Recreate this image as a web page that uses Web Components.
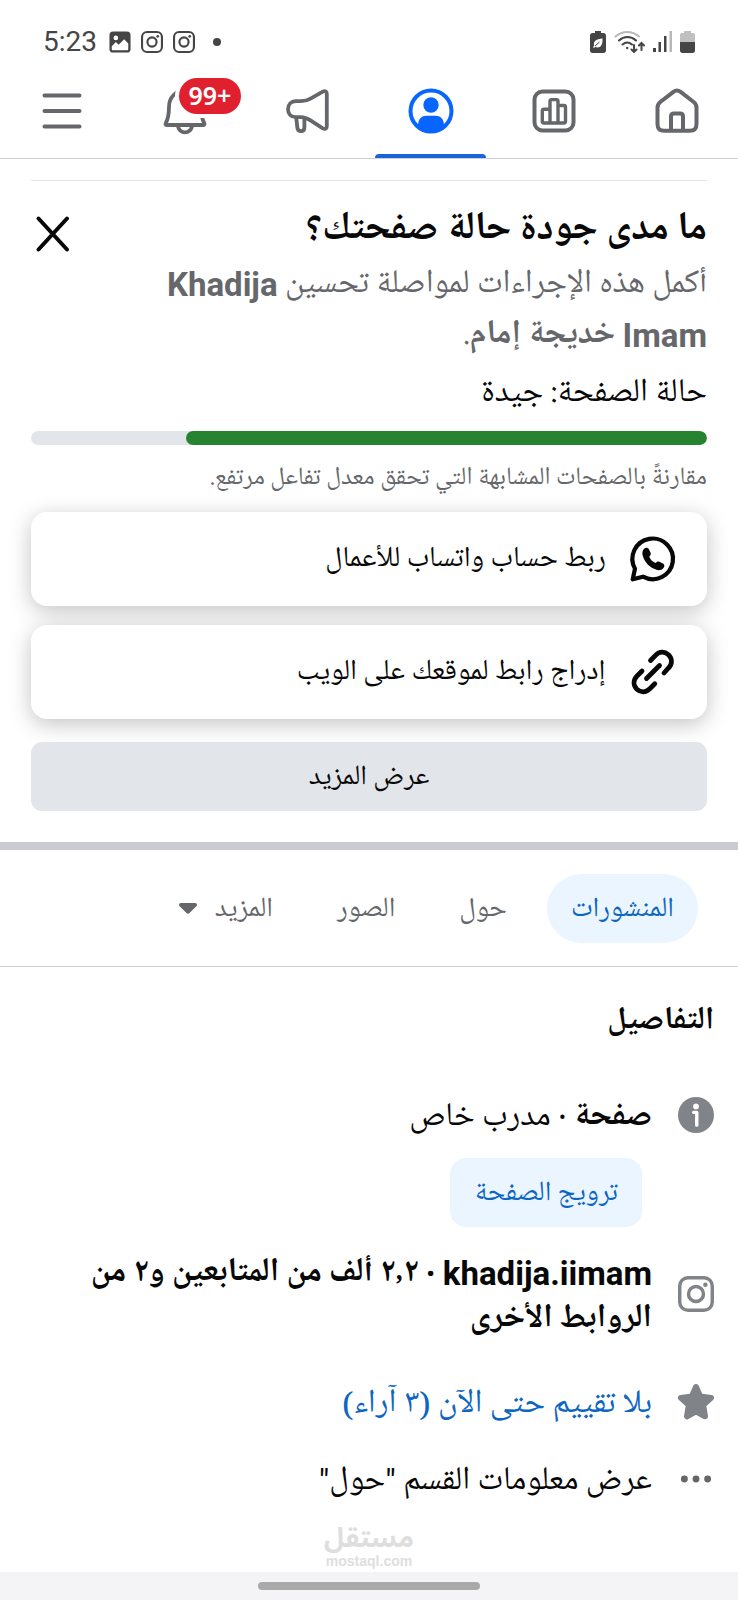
<!DOCTYPE html>
<html lang="ar" dir="rtl">
<head>
<meta charset="utf-8">
<meta name="viewport" content="width=device-width, initial-scale=1">
<title>حالة الصفحة</title>
<style>
  html, body { margin: 0; }
  body {
    background: #fff;
    color: #080809;
    font-family: "Noto Naskh Arabic UI", "Noto Naskh Arabic", Roboto, serif;
    --latin: Roboto, "Liberation Sans", sans-serif;
    --muted: #65676b;
    --blue: #0c66c2;
    --tint: #ebf5ff;
    --line: #ced0d4;
    --wash: #e2e5e9;
  }
</style>
</head>
<body>
<page-screen></page-screen>

<script>
const define = (name, html, setup) => {
  const template = document.createElement('template');
  template.innerHTML = `<style>
    *, ::before, ::after { box-sizing: border-box; }
    svg { display: block; flex: none; }
    button { font: inherit; color: inherit; border: 0; background: none; margin: 0; padding: 0; }
    a { color: inherit; text-decoration: none; }
  </style>` + html;
  customElements.define(name, class extends HTMLElement {
    constructor() {
      super();
      this.attachShadow({ mode: 'open' }).append(template.content.cloneNode(true));
    }
    connectedCallback() { if (setup) setup(this, this.shadowRoot); }
  });
};

const ICONS = {
  home: '<g fill="none" stroke="currentColor" stroke-width="4" stroke-linejoin="round"><path d="M4.5 20.5c0-2.4.9-4 2.8-5.5L20.400 4.900c2.400-1.800 4.800-1.800 7.200 0L40.700 15c1.900 1.500 2.800 3.100 2.800 5.500V37c0 4.800-2 6.800-6.800 6.800H11.300c-4.800 0-6.800-2-6.800-6.800z"/><path d="M18 43V29.500c0-2 1-3 3-3h6c2 0 3 1 3 3V43"/></g>',
  insights: '<g fill="none" stroke="currentColor" stroke-linejoin="round"><rect x="4.500" y="4.500" width="39" height="39" rx="8" stroke-width="4"/><path stroke-width="3.400" d="M20 36h-6c-1 0-1.700-.7-1.700-1.700V24c0-1 .7-1.700 1.700-1.700h6M28 18.500h5.800c1 0 1.700.7 1.700 1.700v14.100c0 1-.7 1.700-1.700 1.700H28M20 36V14.300c0-1 .7-1.700 1.700-1.700h4.600c1 0 1.700.7 1.700 1.700V36z"/></g>',
  profile: '<circle cx="24" cy="24" r="20.500" fill="none" stroke="currentColor" stroke-width="4"/><circle cx="24" cy="18" r="7.700" fill="currentColor"/><path fill="currentColor" d="M11 37.500c.5-5.500 3.500-8.800 8.500-8.800h9c5 0 8 3.300 8.500 8.800C34 42 29.500 44.500 24 44.500S14 42 11 37.500z"/>',
  megaphone: '<g fill="none" stroke="currentColor" stroke-width="3.800" stroke-linecap="round" stroke-linejoin="round"><path d="M12 14.200h5c3.500 0 6.500-.7 9.500-2.500l12.300-7c2.200-1.200 4-.2 4 2.200v32.300c0 2.400-1.800 3.400-4 2.200l-12.300-8c-3-1.900-6-3.200-9.500-3.200h-5c-5 0-8-3.500-8-8s3-8 8-8z"/><path d="M12.300 31l1 9.500c.3 2.400 1.500 3.700 3.700 3.700s3.400-1.300 3.400-3.700V32"/></g>',
  bell: '<g fill="none" stroke="currentColor" stroke-width="3.800" stroke-linejoin="round"><path d="M5.500 38c-.9 0-1.200-.8-.8-1.600C7.500 31 8 28 8 20 8 10 15 3.500 24 3.500S40 10 40 20c0 8 .5 11 3.300 16.400.4.8.1 1.600-.8 1.600z"/><path d="M17 39.500c1 3.800 3.500 5.900 7 5.900s6-2.100 7-5.900"/></g>',
  menu: '<path d="M6.500 8.500h35M6.500 24h35M6.500 39.500h35" stroke="currentColor" stroke-width="4" stroke-linecap="round"/>',
  close: '<path d="M9.500 8.500l28.500 31M38 8.500l-28.500 31" stroke="currentColor" stroke-width="4" stroke-linecap="round"/>',
  whatsapp: '<path d="M3.700 44.300l2.300-10.500A20.300 20.300 0 1 1 14 41.700z" fill="none" stroke="currentColor" stroke-width="4.200" stroke-linejoin="round"/><path fill="currentColor" d="M15.300 13.600c1.600-1.300 3.700-1.100 4.600.7l1.700 3.500c.7 1.500-.1 2.700-1.400 4 1.200 2.800 3.300 5 6.200 6.200 1.300-1.300 2.500-2 4-1.300l3.500 1.700c1.700.9 2 2.900.6 4.500-1.700 2-4.200 2.800-7 1.900-6.600-2-11.500-6.900-13.700-13.700-1-2.900-.3-5.700 1.500-7.500z"/>',
  link: '<g fill="none" stroke="currentColor" stroke-width="4.800" stroke-linecap="round"><path d="M17.500 30.500l13-13"/><path d="M21.500 12.500l5-5.200c4-4 9-4 13-.5 3.900 4 3.900 9.200 0 13.200L35 25"/><path d="M13 23l-5 5c-3.900 4-3.900 9.200-.2 13.200 4 3.600 9 3.600 13-.4l5-5"/></g>',
  info: '<circle cx="24" cy="24" r="24" fill="currentColor"/><circle cx="24" cy="12.500" r="3.800" fill="#fff"/><path d="M21 20.500h4v17" fill="none" stroke="#fff" stroke-width="4.600" stroke-linecap="round" stroke-linejoin="round"/>',
  instagram: '<g fill="none" stroke="currentColor" stroke-width="4.600"><rect x="2.300" y="2.300" width="43.400" height="43.400" rx="11"/><circle cx="24" cy="24" r="10"/></g><circle cx="36.500" cy="11.500" r="3" fill="currentColor"/>',
  star: '<path fill="currentColor" stroke="currentColor" stroke-width="8" stroke-linejoin="round" d="M24 4l5.500 12.500 14.500 2-10.500 9.500 2.500 15L24 36.500 12 43l2.500-15L4 18.500l14.500-2z"/>',
  dots: '<g fill="#65676b"><circle cx="8.500" cy="24" r="4.600"/><circle cx="24" cy="24" r="4.600"/><circle cx="39.500" cy="24" r="4.600"/></g>',
  photo: '<rect x="1" y="1" width="46" height="46" rx="8" fill="currentColor"/><circle cx="15" cy="15" r="5" fill="#fff"/><path fill="#fff" d="M6 33l9-9 6 6 12-12 9 9v12c0 2-1 3-3 3H9c-2 0-3-1-3-3z"/>'
};

define('ui-icon', `<style>
  :host { display: block; flex: none; width: var(--size, 48px); height: var(--size, 48px); }
  svg { width: 100%; height: 100%; overflow: visible; }
</style><svg viewBox="0 0 48 48" aria-hidden="true"></svg>`, (host, root) => {
  root.querySelector('svg').innerHTML = ICONS[host.getAttribute('name')];
});

define('status-bar', `<style>
  :host { display: flex; direction: ltr; align-items: center; justify-content: space-between; height: 64px; padding: 20px 43px 0; color: #454545; --size: 22px; }
  div { display: flex; align-items: center; gap: 10px; }
  .signals { gap: 8px; }
  time { font: 28px/32px var(--latin); padding-inline-end: 2px; }
  .dot { width: 8px; height: 8px; border-radius: 50%; background: currentColor; margin-inline-start: 8px; }
</style>
<div><time>5:23</time><ui-icon name="photo"></ui-icon><ui-icon name="instagram"></ui-icon><ui-icon name="instagram"></ui-icon><span class="dot"></span></div>
<div class="signals">
  <svg width="16" height="22" viewBox="0 0 16 22"><path fill="currentColor" d="M5 0h6v2h2.500C15 2 16 3 16 4.500v15c0 1.500-1 2.500-2.500 2.500h-11C1 22 0 21 0 19.500v-15C0 3 1 2 2.500 2H5z"/><path fill="#fff" d="M12.500 7.500c.3 6-1.500 9-5 9-1 0-1.700-.3-2.300-.8L4 17l-1-1 1.200-1.200C2.800 10 6.500 8 12.500 7.500z"/><path d="M5 15l4.500-4" stroke="currentColor"/></svg>
  <svg width="31" height="22" viewBox="0 0 31 22" fill="none" stroke="currentColor" stroke-width="2" stroke-linecap="round"><path d="M1.500 5.500c7-6 16.500-6 23.500 0" stroke="#b8b8b8"/><path d="M5 9.500c5-4.600 12-4.600 17 0M8.500 13.500c3-2.600 6.500-2.600 9.500 0M20 14v7m-2.500-2.500L20 21l2.500-2.500M27.500 19v-7M25 14.500l2.500-2.500 2.500 2.500"/><circle cx="13.200" cy="17" r="1.200" fill="currentColor" stroke="none"/></svg>
  <svg width="19" height="22" viewBox="0 0 19 22"><path fill="currentColor" d="M0 17h3v4H0zM5.500 11h2.500v10H5.500zM11 5h2.500v16H11z"/><path fill="#b8b8b8" d="M16.500 0H19v21h-2.500z"/></svg>
  <svg width="15" height="22" viewBox="0 0 15 22"><path fill="#c0c0c0" d="M4 0h7v2h2c1.300 0 2 .7 2 2v8H0V4c0-1.300.7-2 2-2h2z"/><path fill="currentColor" d="M0 11h15v8.500c0 1.500-1 2.500-2.500 2.500h-10C1 22 0 21 0 19.500z"/></svg>
</div>`);

define('nav-tab', `<style>
  :host { display: flex; flex: 1; color: var(--muted); }
  :host([active]) { color: #0866ff; }
  a { position: relative; flex: 1; display: flex; align-items: center; justify-content: center; }
  :host([active]) a::after { content: ""; position: absolute; inset: auto 6px 0; height: 4px; border-radius: 4px 4px 0 0; background: #1b63d8; }
  .anchor { position: relative; }
  .badge { position: absolute; left: 18px; top: -9px; height: 36px; padding: 0 10px; border-radius: 18px; background: #e0202f; box-shadow: 0 0 0 4px #fff; color: #fff; font: 600 25px/34px "Noto Sans", sans-serif; direction: ltr; }
  .badge:empty { display: none; }
</style><a href="#"><span class="anchor"><ui-icon></ui-icon><span class="badge"></span></span></a>`, (host, root) => {
  const icon = document.createElement('ui-icon');
  icon.setAttribute('name', host.getAttribute('icon'));
  root.querySelector('ui-icon').replaceWith(icon);
  root.querySelector('.badge').textContent = host.getAttribute('badge') || '';
  root.querySelector('a').setAttribute('aria-label', host.getAttribute('label'));
});

define('top-nav', `<style>
  :host { display: block; border-bottom: 1px solid var(--line); }
  nav { display: flex; height: 94px; }
</style><nav><slot></slot></nav>`);

define('action-card', `<style>
  :host { display: block; }
  button { display: flex; align-items: center; gap: 23px; width: 100%; height: 94px; padding: 0 30px; border-radius: 16px; background: #fff; box-shadow: 0 5px 22px rgba(0, 0, 0, .24); font-size: 29px; line-height: 40px; }
</style><button type="button"><slot name="icon"></slot><span><slot></slot></span></button>`);

define('page-health', `<style>
  :host { display: block; margin: 21px 31px 0; padding: 24px 0 31px; border-top: 1px solid #e4e6e9; }
  .intro { display: flex; align-items: flex-start; gap: 48px; }
  .words { flex: 1; }
  h2, p { margin: 0; }
  h2 { font-size: 39px; font-weight: 700; line-height: 48px; }
  .desc { font-size: 33px; line-height: 50px; color: var(--muted); margin-top: 6px; }
  .latin { font-family: var(--latin); }
  .close { margin-top: 5px; margin-inline-end: -2px; }
  .state { font-size: 33px; line-height: 48px; margin-top: 8px; }
  progress { -webkit-appearance: none; appearance: none; display: block; width: 100%; height: 14px; border: 0; border-radius: 7px; overflow: hidden; background: var(--wash); margin-top: 14px; }
  progress::-webkit-progress-bar { background: var(--wash); }
  progress::-webkit-progress-value { background: #268430; border-radius: 7px; }
  .note { font-size: 25px; line-height: 36px; color: var(--muted); margin-top: 14px; }
  .cards { display: grid; gap: 19px; margin: 17px 0 23px; }
  .more { width: 100%; height: 69px; border-radius: 11px; background: var(--wash); font-size: 28px; line-height: 40px; position: relative; }
</style>
<div class="intro">
  <div class="words">
    <h2>ما مدى جودة حالة صفحتك؟</h2>
    <p class="desc">أكمل هذه الإجراءات لمواصلة تحسين <b><span class="latin">Khadija Imam</span> خديجة إمام</b>.</p>
  </div>
  <button class="close" type="button" aria-label="إغلاق"><ui-icon name="close"></ui-icon></button>
</div>
<p class="state" id="state">حالة الصفحة: جيدة</p>
<progress max="100" value="77" aria-labelledby="state"></progress>
<p class="note">مقارنةً بالصفحات المشابهة التي تحقق معدل تفاعل مرتفع.</p>
<div class="cards">
  <action-card><ui-icon slot="icon" name="whatsapp"></ui-icon>ربط حساب واتساب للأعمال</action-card>
  <action-card><ui-icon slot="icon" name="link"></ui-icon>إدراج رابط لموقعك على الويب</action-card>
</div>
<button class="more" type="button">عرض المزيد</button>`);

define('section-tabs', `<style>
  :host { display: block; border-top: 8px solid #c9ccd1; border-bottom: 1px solid var(--line); }
  nav { display: flex; gap: 16px; padding: 24px 40px 23px; color: var(--muted); font-size: 28px; line-height: 40px; }
  nav > * { display: flex; align-items: center; height: 69px; padding: 0 24px; border-radius: 35px; }
  .on { background: var(--tint); color: var(--blue); }
  button { gap: 18px; }
</style>
<nav><a class="on" href="#">المنشورات</a><a href="#">حول</a><a href="#">الصور</a><button type="button">المزيد<svg width="18" height="11" viewBox="0 0 18 11"><path fill="currentColor" d="M2 0h14c2 0 2.600 1.800 1.300 3.200l-6.500 6.600c-1.200 1.200-2.400 1.200-3.600 0L.7 3.200C-.6 1.800 0 0 2 0z"/></svg></button></nav>`);

define('detail-row', `<style>
  :host { display: flex; align-items: center; gap: 26px; font-size: 33px; line-height: 45px; }
  ::slotted(ui-icon) { --size: 36px; color: #808387; }
  .text { flex: 1; padding-top: 4px; }
</style><slot name="icon"></slot><div class="text"><slot></slot></div>`);

define('page-details', `<style>
  :host { display: block; padding: 30px 24px 0; }
  h3 { margin: 0; font-size: 32px; font-weight: 700; line-height: 48px; }
  ul { list-style: none; margin: 0; padding: 0; }
  li { margin-top: 28px; }
  .first { margin-top: 45px; }
  .promote { display: block; height: 69px; margin: 19px 72px 0; padding: 0 24px; border-radius: 16px; background: var(--tint); color: var(--blue); font-size: 28px; line-height: 40px; }
  .accounts { margin-top: 19px; }
  .rating { margin-top: 36px; color: var(--blue); }
  .latin { font-family: var(--latin); }
</style>
<h3>التفاصيل</h3>
<ul>
  <li class="first"><detail-row><ui-icon slot="icon" name="info"></ui-icon><b>صفحة</b> · مدرب خاص</detail-row>
    <button class="promote" type="button">ترويج الصفحة</button></li>
  <li class="accounts"><detail-row><ui-icon slot="icon" name="instagram"></ui-icon><b><span class="latin">khadija.iimam</span> · ٢٫٢ ألف من المتابعين و٢ من الروابط الأخرى</b></detail-row></li>
  <li class="rating"><detail-row><ui-icon slot="icon" name="star"></ui-icon><a href="#">بلا تقييم حتى الآن (٣ آراء)</a></detail-row></li>
  <li><detail-row><ui-icon slot="icon" name="dots"></ui-icon><a href="#">عرض معلومات القسم <span class="latin">"</span>حول<span class="latin">"</span></a></detail-row></li>
</ul>`);

define('page-footer', `<style>
  :host { display: block; margin-top: auto; text-align: center; }
  .mark { color: #dedede; padding-bottom: 3px; }
  .ar { display: block; font: 700 27px/28px "Noto Sans Arabic", "DejaVu Sans", sans-serif; }
  .en { display: block; font: 700 14px/16px "Liberation Sans", Arial, sans-serif; direction: ltr; }
  .bar { display: flex; justify-content: center; padding: 10px 0; background: #f4f4f6; }
  .pill { width: 30%; height: 8px; border-radius: 4px; background: #a9a9aa; }
</style>
<div class="mark"><span class="ar">مستقل</span><span class="en">mostaql.com</span></div>
<div class="bar"><span class="pill"></span></div>`);

define('page-screen', `<style>
  :host { display: flex; flex-direction: column; min-height: 100vh; }
</style>
<status-bar></status-bar>
<top-nav>
  <nav-tab icon="home" label="الرئيسية"></nav-tab>
  <nav-tab icon="insights" label="الرؤى"></nav-tab>
  <nav-tab icon="profile" label="الملف الشخصي" active></nav-tab>
  <nav-tab icon="megaphone" label="الإعلانات"></nav-tab>
  <nav-tab icon="bell" label="الإشعارات" badge="99+"></nav-tab>
  <nav-tab icon="menu" label="القائمة"></nav-tab>
</top-nav>
<page-health></page-health>
<section-tabs></section-tabs>
<page-details></page-details>
<page-footer></page-footer>`);
</script>
</body>
</html>
